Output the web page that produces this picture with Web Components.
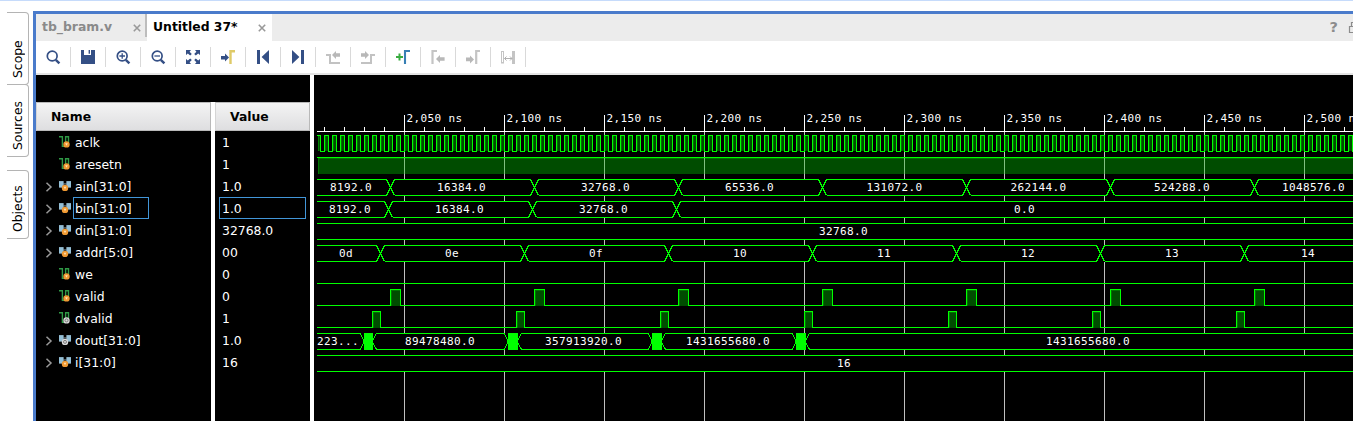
<!DOCTYPE html>
<html lang="en">
<head>
<meta charset="utf-8">
<title>Waveform viewer</title>
<style>
html,body{margin:0;height:421px;overflow:hidden;background:#fff}
body{font-family:"DejaVu Sans",sans-serif;font-size:12.4px;color:#000}
</style>
</head>
<body>
<wave-app></wave-app>
<script>
const define = (name, html, init) => customElements.define(name, class extends HTMLElement {
  connectedCallback() {
    if (this.shadowRoot) return;
    const root = this.attachShadow({mode: 'open'});
    const t = document.createElement('template');
    t.innerHTML = typeof html === 'function' ? html(this) : html;
    root.append(t.content.cloneNode(true));
    if (init) init(this, root);
  }
});

/* Toolbar and signal icons */
const blue = '#344f85', grey = '#b8b8b8';
const lens = `<circle cx="6.2" cy="6" r="4.9" fill="none" stroke="${blue}" stroke-width="1.7"/><path d="M9.8 9.8L13.4 13.4" stroke="${blue}" stroke-width="2.4"/>`;
const ICONS = {
  search: lens,
  save: `<path fill="${blue}" d="M0 0H3V5H10V0H14V14H0Z"/><path fill="${blue}" d="M7.6 0H9V3.8H7.6Z"/>`,
  zoomin: lens + `<path d="M3.4 6H9M6.2 3.2V8.8" stroke="${blue}" stroke-width="1.3"/>`,
  zoomout: lens + `<path d="M3.4 6H9" stroke="${blue}" stroke-width="1.3"/>`,
  fit: `<g fill="${blue}"><path d="M0 0H5L3.6 1.8 5.8 4 4.2 5.6 1.8 3.4 0 5Z"/><path d="M14 0H9L10.4 1.8 8.2 4 9.8 5.6 12.2 3.4 14 5Z"/><path d="M0 14H5L3.6 12.2 5.8 10 4.2 8.4 1.8 10.6 0 9Z"/><path d="M14 14H9L10.4 12.2 8.2 10 9.8 8.4 12.2 10.6 14 9Z"/></g>`,
  goto: `<path d="M0 6H4V3.6L8 7.6 4 11.6V9.4H0Z" fill="${blue}"/><path d="M14 1.2H9.5V14" fill="none" stroke="#dfca68" stroke-width="2.4"/>`,
  first: `<path fill="${blue}" d="M1 0H4V14H1ZM13 0V14L5.6 7Z"/>`,
  last: `<path fill="${blue}" d="M10 0H13V14H10ZM1 0V14L8.4 7Z"/>`,
  prev: `<path d="M0 5H4V13H14" fill="none" stroke="#c2c2c2" stroke-width="2"/><path d="M6 5L10 1V3.2H14V6.8H10V9Z" fill="${grey}"/>`,
  next: `<path d="M14 5H10V13H0" fill="none" stroke="#c2c2c2" stroke-width="2"/><path d="M8 5L4 1V3.2H0V6.8H4V9Z" fill="${grey}"/>`,
  add: `<path d="M0 7H7M3.5 3.5V10.5" stroke="#39ac40" stroke-width="2"/><path d="M14 1H9V14" fill="none" stroke="#377fb4" stroke-width="2.1"/>`,
  mprev: `<path d="M6 1H1.5V14" fill="none" stroke="#c4c4c4" stroke-width="2.2"/><path d="M5 9L9 5V7.2H13.6V10.8H9V13Z" fill="${grey}"/>`,
  mnext: `<path d="M14 1H10.2V14" fill="none" stroke="#c4c4c4" stroke-width="2.2"/><path d="M8 9.4L4 5.4V7.6H0V11.2H4V13.4Z" fill="${grey}"/>`,
  span: `<rect x=".5" y="1.5" width="2" height="11.5" fill="none" stroke="#c4c4c4"/><rect x="11" y="1" width="3" height="13" fill="#c4c4c4"/><path d="M3.5 8.5H11M5.5 6.5L3.5 8.5 5.5 10.5M9 6.5L11 8.5 9 10.5" fill="none" stroke="#b0b0b0"/>`
};
const dot = (x, y, out) => out
  ? `<circle cx="${x}" cy="${y}" r="3.2" fill="#d9d9d9"/><circle cx="${x}" cy="${y}" r="1.5" fill="none" stroke="#707070" stroke-width=".9"/>`
  : `<circle cx="${x}" cy="${y}" r="3.2" fill="#f09a33"/><path d="M${x-1.3} ${y-1.2}L${x} ${y+1.4} ${x+1.3} ${y-1.2}Z" fill="#ffe2b4"/>`;
const signal = out => `<path d="M0 .7H3.4V10.4H6.6V.7H9.5V6" fill="none" stroke="#2f9a46" stroke-width="1.4"/>` + dot(7.5, 8.4, out);
const bus = out => `<g transform="translate(0 1)"><path d="M0 0H4.6V2.2H7.4V0H12V7H9L7 3.5H5L3 7H0Z" fill="#65757d"/><path d="M0 .3H4.4V4L3 6H0ZM7.6 .3H12V6H9L7.6 4Z" fill="#93bfd6"/>${dot(6, 6.9, out)}</g>`;
ICONS.sig = signal(0); ICONS.sigout = signal(1); ICONS.bus = bus(0); ICONS.busout = bus(1);

define('ui-icon', el => `<style>:host{display:block;width:14px;height:14px;flex:none}svg{display:block;overflow:visible}</style>
<svg width="14" height="14" viewBox="0 0 14 14">${ICONS[el.getAttribute('name')]}</svg>`);

define('side-tab', `<style>
:host{display:block;box-sizing:border-box;width:22px;border:1px solid #b4b4b4;border-left:0;border-radius:0 4px 4px 0}
div{height:100%;width:100%;display:flex;align-items:center;justify-content:center;writing-mode:vertical-rl;transform:rotate(180deg);white-space:nowrap;line-height:14px}
</style><div><slot></slot></div>`);

define('side-rail', `<style>:host{display:block;width:33px;padding:12px 0 0 7px;box-sizing:border-box}
side-tab{height:73px}side-tab+side-tab{margin-top:-1px}side-tab.gap{margin-top:13px;height:69px}
.a{padding-top:21px;box-sizing:border-box}.b{padding-top:9px}.c{padding-top:9px}</style>
<side-tab class="a">Scope</side-tab><side-tab class="b">Sources</side-tab><side-tab class="gap c">Objects</side-tab>`);

define('doc-tab', `<style>
:host{display:flex;box-sizing:border-box;height:27px;font-weight:bold;color:#8a8a8a;white-space:nowrap;line-height:25px;justify-content:space-between;padding:0 4px 0 6px}
:host([active]){background:#fff;color:#000;padding:0 6px}
svg{margin-top:10px;flex:none}
</style><slot></slot><svg width="8" height="8"><path d="M.8 .8L7.2 7.2M7.2 .8L.8 7.2" stroke="#999" stroke-width="1.6"/></svg>`);

define('tab-bar', `<style>
:host{display:flex;height:27px;background:#ececec;overflow:hidden}
.one{width:109px}.two{width:125px}i{width:2px;height:23px;background:#bdbdbd}
.help{margin-left:auto;font-weight:bold;font-size:14.5px;color:#8c8c8c;line-height:27px}
svg{margin:8px 0 0 10px;width:5px;flex:none}
</style><doc-tab class="one">tb_bram.v</doc-tab><i></i><doc-tab class="two" active>Untitled 37*</doc-tab>
<span class="help">?</span><svg width="5" height="12"><path d="M5 4.5H1.5V10.5H5M3.5 4.5V.5H5" fill="none" stroke="#8c8c8c" stroke-width="1.2"/></svg>`);

define('tool-bar', `<style>
:host{display:flex;height:32px;background:#fff;border-bottom:2px solid #e4e4e4}
span{width:35px;height:20px;margin-top:6px;border-right:1px solid #d9d9d9;box-sizing:border-box;padding:3px 0 0 10px}
</style>` + ['search','save','zoomin','zoomout','fit','goto','first','last','prev','next','add','mprev','mnext','span']
  .map(n => `<span><ui-icon name="${n}"></ui-icon></span>`).join(''));

define('col-head', `<style>
:host{display:block;height:29px;box-sizing:border-box;border:1px solid #b9b9b9;border-left-color:#d5d5d5;background:linear-gradient(#f4f4f4,#dedee0);font-weight:bold;line-height:27px;padding-left:14px}
</style><slot></slot>`);

define('signal-row', el => `<style>
:host{display:flex;height:22px;align-items:flex-start;color:#fff;padding-left:9px;white-space:nowrap;box-sizing:border-box}
.chev{width:14px;flex:none;height:10px;margin-top:7px}ui-icon{width:12px;height:14px;margin-top:5px}
b{font-weight:normal;height:20px;line-height:22px;padding:0 0 0 1px;margin-left:2px;border:1px solid transparent}
:host([selected]) b{border-color:#4296d8;width:73px}
</style><svg class="chev" width="14" height="10">${el.hasAttribute('wide') ? '<path d="M1.5 .8L6 5 1.5 9.2" fill="none" stroke="#999" stroke-width="1.5"/>' : ''}</svg>
<ui-icon name="${el.getAttribute('icon')}"></ui-icon><b><slot></slot></b>`);

define('value-row', `<style>
:host{display:block;height:22px;color:#fff;margin:0 4px 0 4px;padding-left:2px;line-height:22px;box-sizing:border-box;border:1px solid transparent}
:host([selected]){border-color:#4296d8}
</style><slot></slot>`);

const rows = [['aclk','1','sig'],['aresetn','1','sig'],['ain[31:0]','1.0','bus'],['bin[31:0]','1.0','bus'],['din[31:0]','32768.0','bus'],['addr[5:0]','00','bus'],['we','0','sig'],['valid','0','sig'],['dvalid','1','sigout'],['dout[31:0]','1.0','busout'],['i[31:0]','16','bus']];
define('signal-table', () => `<style>
:host{display:grid;grid-template-columns:175px 95px;column-gap:4px;width:274px;box-sizing:border-box;border-top:27px solid #000;background:#fff;flex:none}
section{background:#000}
</style><section><col-head>Name</col-head>${rows.map((r, i) => `<signal-row icon="${r[2]}" ${r[2].startsWith('bus') ? 'wide' : ''} ${i === 3 ? 'selected' : ''}>${r[0]}</signal-row>`).join('')}</section>
<section><col-head>Value</col-head>${rows.map((r, i) => `<value-row ${i === 3 ? 'selected' : ''}>${r[1]}</value-row>`).join('')}</section>`);

/* Waveform canvas: coordinates are window pixels, shifted by the viewBox */
function drawWaves() {
  const L = 317, R = 1353, out = [];
  const line = (d, c = '#00ff00') => out.push(`<path d="${d}" fill="none" stroke="${c}"/>`);
  const rect = (x, y, w, h, c) => out.push(`<rect x="${x}" y="${y}" width="${w}" height="${h}" fill="${c}"/>`);
  const label = (s, cx, y) => out.push(`<text x="${cx - s.length * 3.5}" y="${y}">${s}</text>`);
  const top = r => 135 + 22 * r;
  for (let x = 404; x < R; x += 100) rect(x, 132, 1, 289, '#c0c0c0');
  rect(L, 131, R - L, 1, '#fff');
  for (let x = 324; x < R; x += 20) rect(x, 127, 1, 4, '#fff');
  for (let x = 404, t = 2050; x < R; x += 100, t += 50) {
    rect(x, 115, 1, 16, '#fff');
    out.push(`<text x="${x + 2.4}" y="122">${t.toLocaleString('en-US')} ns</text>`);
  }
  let d = 'M317 135.5H320.5V151.5';
  rect(318, 136, 2, 15, '#004c00'); rect(318, 136, 1, 15, '#008000');
  for (let x = 324; x < R; x += 8) {
    rect(x + 1, 136, 3, 15, '#004c00'); rect(x + 1, 136, 1, 15, '#007300');
    d += `H${x + .5}V135.5H${x + 4.5}V151.5`;
  }
  line(d);
  rect(L + 1, 158, R - L, 16, '#004c00'); rect(L + 1, 158, R - L, 1, '#007300'); rect(L + 1, 158, 1, 16, '#007300');
  for (let x = 404; x < R; x += 100) rect(x, 158, 1, 16, '#80c080');
  line(`M${L} 157.5H${R}`);

  const busRow = (r, cuts, labels) => {
    const a = top(r) + .5, b = a + 16;
    rect(L, a - .5, R - L, 17, '#000');
    let u = `M${L} ${a}`, v = `M${L} ${b}`;
    for (const c of cuts) {
      u += `H${c - 3.5}L${c + 4.5} ${b}`; v += `H${c - 3.5}L${c + 4.5} ${a}`;
      line(u); line(v);
      u = `M${c + 4.5} ${a}`; v = `M${c + 4.5} ${b}`;
    }
    line(u + `H${R}`); line(v + `H${R}`);
    labels.forEach(([s, x]) => label(s, x, a + 11.5));
  };
  const seq = (s, n) => Array.from({length: n}, (_, i) => s + 144 * i);
  busRow(2, seq(390, 7), [['8192.0',351],['16384.0',461.5],['32768.0',605.5],['65536.0',749.5],['131072.0',894.5],['262144.0',1038.5],['524288.0',1182],['1048576.0',1313.5]]);
  busRow(3, seq(388, 3), [['8192.0',350],['16384.0',459.5],['32768.0',603.5],['0.0',1024.5]]);
  busRow(4, [], [['32768.0',843.5]]);
  busRow(5, seq(380, 7), [['0d',346],['0e',452],['0f',596],['10',740],['11',884],['12',1028],['13',1172],['14',1308]]);
  line(`M${L} 283.5H${R}`);
  const pulses = (r, s, w) => {
    const a = top(r) + .5, b = a + 16;
    let p = `M${L} ${b}`;
    for (const x of seq(s, 7)) {
      rect(x + 1, a + .5, w - 1, 16, '#004c00'); rect(x + 1, a + .5, w - 1, 1, '#007300'); rect(x + 1, a + .5, 1, 16, '#007300');
      p += `H${x + .5}V${a}H${x + w + .5}V${b}`;
    }
    line(p + `H${R}`);
  };
  pulses(7, 390, 10); pulses(8, 372, 8);
  busRow(9, [], [['89478480.0',440],['357913920.0',583.5],['1431655680.0',728],['1431655680.0',1088]]);
  out.push(`<text x="317" y="345">223...</text>`);
  for (const [x, w] of [[364, 8], [508, 9], [652, 9], [796, 9]]) {
    rect(x - 3, 333, w + 7, 17, '#000');
    line(`M${x - 3.5} 333.5L${x} 341.5L${x - 3.5} 349.5M${x + w + 4.5} 333.5L${x + w} 341.5L${x + w + 4.5} 349.5`);
    rect(x, 333, w + .5, 17, '#00ff00');
  }
  busRow(10, [], [['16',844]]);
  return out.join('');
}
define('wave-canvas', () => `<style>
:host{display:block;background:#000;flex:1;min-width:0;overflow:hidden}
svg{display:block}
text{font:11px "DejaVu Sans Mono",monospace;letter-spacing:.378px;fill:#fff;white-space:pre}
</style><svg width="1039" height="346" viewBox="314 75 1039 346" shape-rendering="crispEdges">${drawWaves()}</svg>`);

define('wave-app', `<style>
:host{display:grid;grid-template-columns:33px 1fr;width:1353px;height:421px;box-sizing:border-box;border-top:1px solid #c6dbfb;overflow:hidden}
side-rail{margin-top:-1px}
main{display:flex;flex-direction:column;margin-top:10px;border:3px solid #4a7bcb;border-right:0;border-bottom:0;min-width:0}
.body{display:flex;gap:4px;height:346px}
</style><side-rail></side-rail><main><tab-bar></tab-bar><tool-bar></tool-bar><div class="body"><signal-table></signal-table><wave-canvas></wave-canvas></div></main>`);
</script>
</body>
</html>
